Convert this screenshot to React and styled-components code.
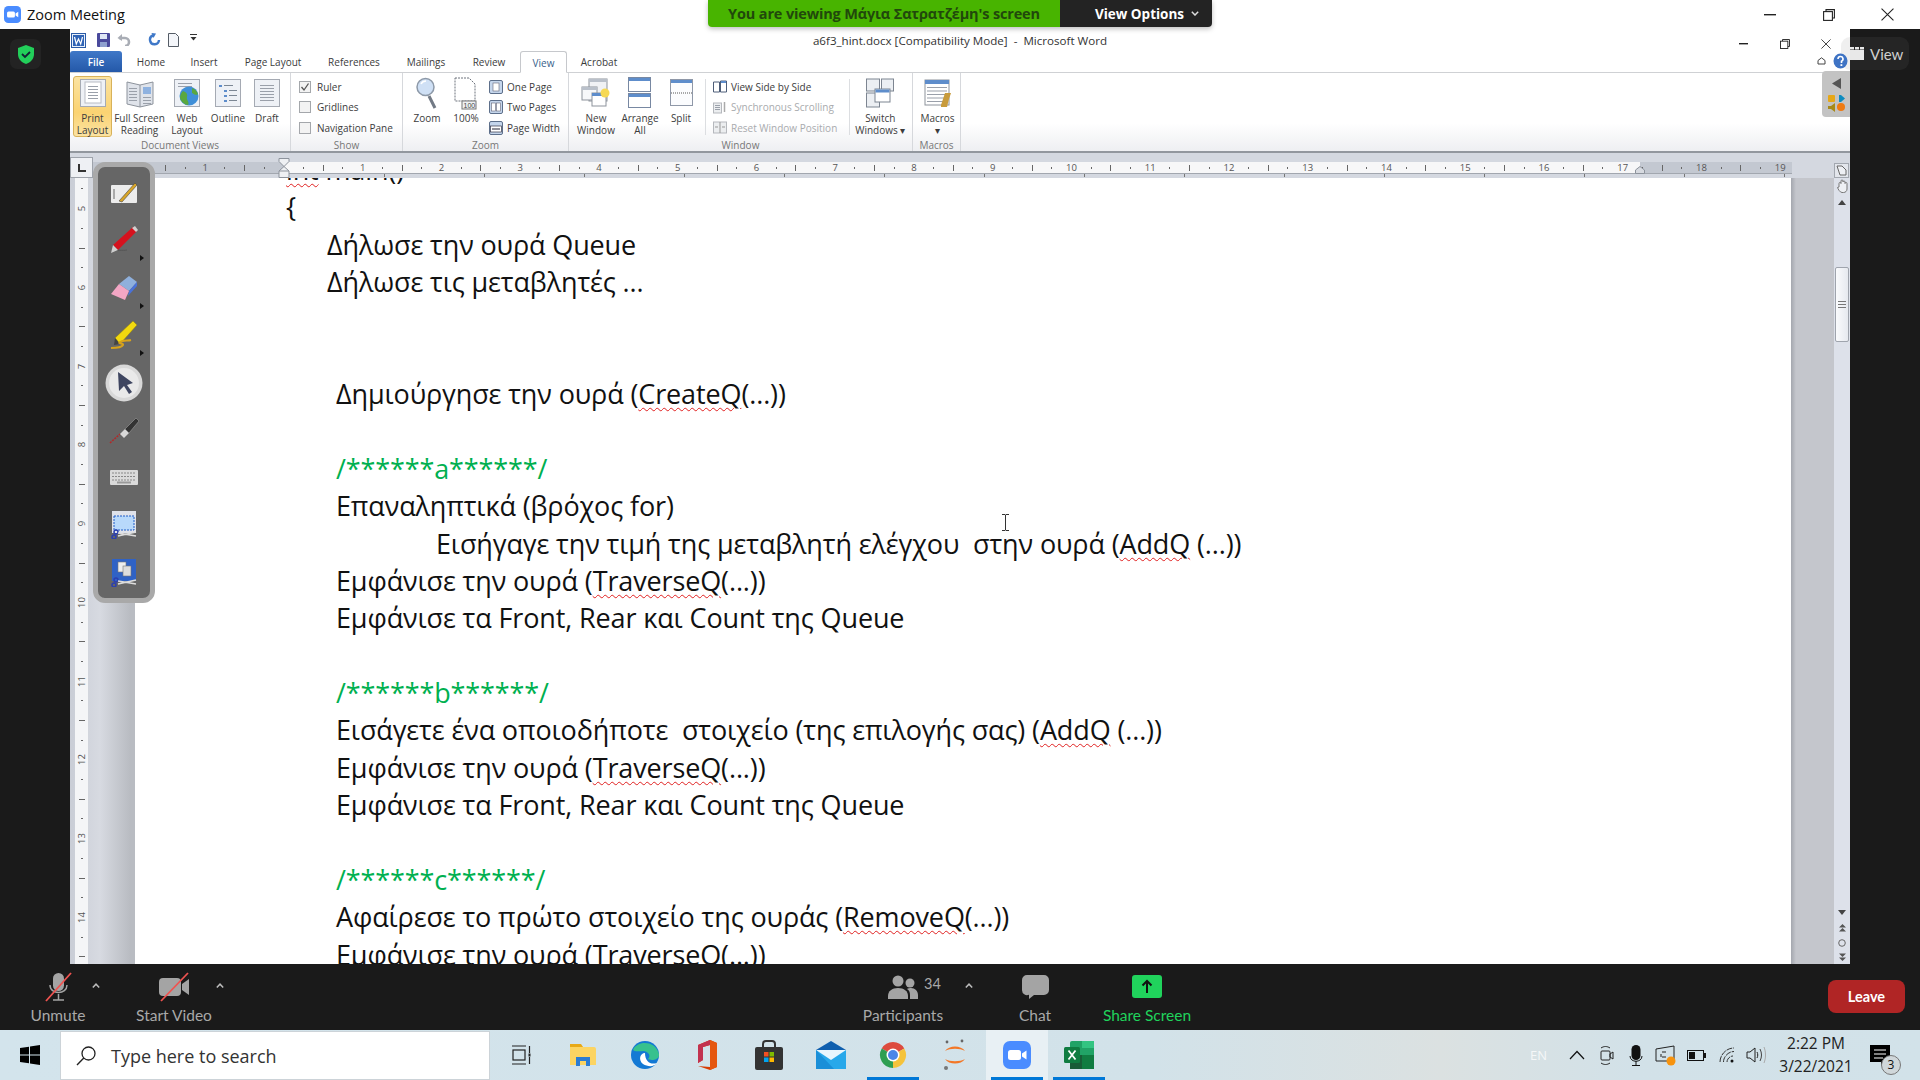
import React from "react";
import styled, { createGlobalStyle } from "styled-components";

const GlobalStyle = createGlobalStyle`
  html, body { margin: 0; padding: 0; background: #1a1a1a; }
  * { box-sizing: border-box; }
`;

const UI_FONT = `"Open Sans", "Noto Sans", sans-serif`;
const ZOOM_FONT = `Lato, "Noto Sans", sans-serif`;

const Screen = styled.div`
  position: relative;
  width: 1920px;
  height: 1080px;
  overflow: hidden;
  display: flex;
  flex-direction: column;
  font-family: ${UI_FONT};
`;

/* ---------- zoom window title ---------- */
const TitleBar = styled.div`
  height: 29px;
  flex: none;
  background: #fff;
  display: flex;
  align-items: center;
  padding: 0 3px 0 4px;
`;
const AppName = styled.span`
  margin-left: 6px;
  font-size: 14.5px;
  color: #111;
`;
const WinButtons = styled.div`
  margin-left: auto;
  display: flex;
`;
const WinButton = styled.div`
  width: ${(p) => p.$w}px;
  display: flex;
  justify-content: center;
  align-items: center;
`;

const Banner = styled.div`
  position: absolute;
  left: 708px;
  top: 0;
  width: 504px;
  height: 27px;
  display: flex;
  border-radius: 0 0 4px 4px;
  overflow: hidden;
  box-shadow: 0 2px 5px rgba(0, 0, 0, 0.25);
  font-size: 14.5px;
  font-weight: 700;
`;
const BannerText = styled.div`
  width: 352px;
  background: #48b400;
  color: #21480c;
  display: flex;
  align-items: center;
  justify-content: center;
  letter-spacing: -0.15px;
`;
const BannerAction = styled.div`
  flex: 1;
  background: #232323;
  color: #fff;
  display: flex;
  align-items: center;
  justify-content: center;
  gap: 7px;
  padding-left: 22px;
  font-size: 13.5px;
`;

/* ---------- main row ---------- */
const MainRow = styled.div`
  flex: none;
  height: 935px;
  display: flex;
  background: #1a1a1a;
`;
const Rail = styled.div`
  width: 70px;
  flex: none;
  background: #1a1a1a;
  padding: 10px 0 0 10px;
`;
const ShieldBox = styled.div`
  width: 31px;
  height: 30px;
  border-radius: 7px;
  background: #232323;
  display: flex;
  align-items: center;
  justify-content: center;
`;
const ViewButton = styled.div`
  position: absolute;
  z-index: 2;
  left: 1841px;
  top: 37px;
  width: 68px;
  height: 33px;
  border-radius: 9px;
  background: rgba(120, 120, 120, 0.12);
  display: flex;
  align-items: center;
  padding-left: 9px;
  gap: 6px;
  font-family: ${ZOOM_FONT};
  font-size: 15px;
  color: #cfcfcf;
`;

/* ---------- word ---------- */
const Word = styled.div`
  width: 1780px;
  flex: none;
  display: flex;
  flex-direction: column;
  background: #fff;
`;
const WordTop = styled.div`
  height: 23px;
  flex: none;
  display: grid;
  grid-template-columns: 1fr auto 1fr;
`;
const Qat = styled.div`
  display: flex;
  align-items: flex-start;
  padding-top: 4px;
`;
const QatSlot = styled.div`
  width: ${(p) => p.$w}px;
  margin-left: ${(p) => p.$ml || 0}px;
  display: flex;
  justify-content: center;
`;
const WordTitle = styled.div`
  font-size: 11.6px;
  line-height: 24px;
  color: #333;
  white-space: pre;
`;
const WordButtons = styled.div`
  display: flex;
  justify-content: flex-end;
  padding: 5px 4px 0 0;
`;
const TabRow = styled.div`
  height: 21px;
  flex: none;
  display: flex;
  align-items: flex-end;
  border-bottom: 1px solid #cfd1d4;
`;
const FileTab = styled.div`
  width: 52px;
  height: 21px;
  border-radius: 3px 3px 0 0;
  background: linear-gradient(#3f78c8, #2458a8);
  color: #fff;
  font-size: 10px;
  font-weight: 600;
  text-align: center;
  line-height: 23px;
`;
const Tab = styled.div`
  width: ${(p) => p.$w}px;
  margin-left: ${(p) => p.$ml || 0}px;
  height: 21px;
  font-size: 10px;
  line-height: 23px;
  text-align: center;
  color: ${(p) => (p.$active ? "#3a5f8c" : "#3b3b3b")};
  white-space: nowrap;
  ${(p) =>
    p.$active &&
    `background:#fff;border:1px solid #c6c8cc;border-bottom:1px solid #fff;border-radius:3px 3px 0 0;margin-bottom:-1px;height:22px;line-height:22px;`}
`;
const HelpBox = styled.div`
  position: relative;
  z-index: 3;
  margin-left: auto;
  height: 21px;
  display: flex;
  align-items: center;
  gap: 7px;
  padding: 0 2px 2px 0;
`;

const Ribbon = styled.div`
  height: 80px;
  flex: none;
  display: flex;
  background: linear-gradient(#fff 0, #fff 50px, #eeeff2 100%);
  border-bottom: 2px solid #92979e;
`;
const Group = styled.div`
  width: ${(p) => p.$w}px;
  flex: none;
  display: flex;
  flex-direction: column;
  border-right: 1px solid #d6d8dc;
`;
const GroupBody = styled.div`
  height: 66px;
  display: flex;
  padding: 3px 0 0 ${(p) => p.$pl || 0}px;
`;
const GroupLabel = styled.div`
  font-size: 10px;
  line-height: 12px;
  text-align: center;
  color: #777;
`;
const LargeButton = styled.div`
  width: ${(p) => p.$w}px;
  flex: none;
  height: 61px;
  display: flex;
  flex-direction: column;
  align-items: center;
  font-size: 10px;
  line-height: 12px;
  color: #3c3c3c;
  text-align: center;
  white-space: pre;
  padding-top: 2px;
  border-radius: 3px;
  ${(p) =>
    p.$active &&
    `background:linear-gradient(#fbe3a2,#fbd372 60%,#fbe3a2);border:1px solid #d8b25a;padding-top:1px;`}
`;
const LargeIcon = styled.div`
  height: 30px;
  margin-bottom: 4px;
  display: flex;
  align-items: center;
  justify-content: center;
`;
const SmallColumn = styled.div`
  display: flex;
  flex-direction: column;
  padding-top: 2px;
  gap: 3.5px;
  margin-left: ${(p) => p.$ml || 0}px;
`;
const SmallItem = styled.div`
  height: 17px;
  display: flex;
  align-items: center;
  gap: ${(p) => p.$gap || 4}px;
  font-size: 10px;
  white-space: nowrap;
  color: ${(p) => (p.$muted ? "#a9abae" : "#3c3c3c")};
`;
const CheckBox = styled.div`
  width: 12px;
  height: 12px;
  border: 1px solid #a4a7ab;
  background: #f3f3f3;
  display: flex;
  align-items: center;
  justify-content: center;
`;
const RibbonDivider = styled.div`
  width: 1px;
  height: 56px;
  margin: 3px 0 0 ${(p) => p.$ml || 0}px;
  background: #dcdee1;
`;
const AddInPanel = styled.div`
  position: absolute;
  left: 1822px;
  top: 71px;
  width: 28px;
  height: 46px;
  background: #c3c3c3;
  border-radius: 4px 0 0 4px;
  display: flex;
  align-items: center;
  justify-content: center;
`;

/* ---------- rulers ---------- */
const RulerRow = styled.div`
  height: 25px;
  flex: none;
  display: flex;
  background: #d4d8e0;
`;
const TabStopBox = styled.div`
  width: 23px;
  height: 21px;
  margin-top: 4px;
  border: 1px solid #9ea3ab;
  background: #eef0f4;
  display: flex;
  align-items: center;
  justify-content: center;
`;
const HRuler = styled.div`
  position: relative;
  width: 1699px;
  height: 12px;
  margin-top: 9px;
  padding-left: 23.55px;
  display: flex;
  overflow: hidden;
  background: linear-gradient(
    90deg,
    #c3c8d1 0,
    #c3c8d1 191px,
    #f7f7f8 191px,
    #f7f7f8 1547px,
    #c3c8d1 1547px
  );
  border-bottom: 1px solid #a2a7af;
`;
const HSlot = styled.div`
  width: 19.7px;
  flex: none;
  display: flex;
  align-items: center;
  justify-content: center;
  font-size: 9.5px;
  color: #555;
`;
const HLine = styled.div`
  width: 1px;
  height: ${(p) => (p.$long ? 6 : 2)}px;
  background: #666;
`;
const ViewRulerToggle = styled.div`
  width: 15px;
  height: 15px;
  margin: 10px 1px 0 auto;
  border: 1px solid #a2a7af;
  background: #e3e6ec;
  display: flex;
  align-items: center;
  justify-content: center;
`;
const TabMarks = styled.div`
  position: absolute;
  left: 93px;
  top: 174px;
  width: 1699px;
  height: 3px;
  background: repeating-linear-gradient(
    90deg,
    transparent 0,
    transparent 99px,
    #777 99px,
    #777 100px
  );
  background-position: 92px 0;
`;
const IndentMark = styled.div`
  position: absolute;
  left: ${(p) => p.$x}px;
  top: ${(p) => p.$y}px;
  line-height: 0;
`;
const DocArea = styled.div`
  height: 786px;
  flex: none;
  display: flex;
  background: #c8ccd4;
`;
const VRuler = styled.div`
  width: 65px;
  flex: none;
  padding: 0 0 0 5px;
  background: linear-gradient(90deg, #c9cdd6 0, #d7dae1 30px, #b9bcc2 60px);
`;
const VTrack = styled.div`
  width: 13px;
  height: 100%;
  padding-top: 1.15px;
  background: #f4f5f7;
  overflow: hidden;
`;
const VSlot = styled.div`
  height: 19.7px;
  display: flex;
  align-items: center;
  justify-content: center;
  font-size: 9.5px;
  color: #555;
`;
const VNumber = styled.span`
  transform: rotate(-90deg);
`;
const VLine = styled.div`
  height: 1px;
  width: ${(p) => (p.$long ? 6 : 2)}px;
  background: #666;
`;
const Page = styled.div`
  width: 1656px;
  flex: none;
  overflow: hidden;
  background: #fff;
`;
const DocText = styled.div`
  margin-top: -27px;
  padding-left: 151px;
  font-family: "Open Sans", "Noto Sans", sans-serif;
  font-size: 27px;
  letter-spacing: -0.13px;
  color: #111;
`;
const DocLine = styled.div`
  height: 37.37px;
  line-height: 37.37px;
  padding-left: ${(p) => p.$indent || 0}px;
  white-space: pre;
  color: ${(p) => (p.$comment ? "#00b050" : "#111")};
`;
const Spell = styled.span`
  text-decoration: underline wavy #e02020 1px;
  text-underline-offset: 3px;
`;
const PageGutter = styled.div`
  width: 43px;
  flex: none;
  background: linear-gradient(90deg, #a4a7ae 0, #c4c6cc 5px, #c4c6cc 100%);
`;
const ScrollBar = styled.div`
  width: 16px;
  flex: none;
  display: flex;
  flex-direction: column;
  align-items: center;
  background: #dde1ea;
`;
const ScrollCell = styled.div`
  height: ${(p) => p.$h}px;
  width: 100%;
  flex: none;
  display: flex;
  align-items: center;
  justify-content: center;
`;
const ScrollThumb = styled.div`
  width: 14px;
  height: 75px;
  margin-top: 57px;
  border: 1px solid #9fa4ad;
  border-radius: 2px;
  background: linear-gradient(90deg, #fafbfd, #e6e9ef);
  display: flex;
  align-items: center;
  justify-content: center;
`;
const ScrollSpacer = styled.div`
  flex: 1;
`;

/* ---------- annotate toolbar ---------- */
const AnnotateBar = styled.div`
  position: absolute;
  left: 93px;
  top: 162px;
  width: 62px;
  height: 441px;
  padding: 2px 0 0;
  border: 5px solid #a9a9a9;
  border-radius: 12px;
  background: #666;
`;
const AnnotateSlot = styled.div`
  position: relative;
  height: 47.5px;
  display: flex;
  align-items: center;
  justify-content: center;
  ${(p) =>
    p.$more &&
    `&::after{content:"";position:absolute;right:6px;bottom:3px;border-left:4px solid #111;border-top:3.5px solid transparent;border-bottom:3.5px solid transparent;}`}
`;
const TextCursor = styled.div`
  position: absolute;
  left: 1001px;
  top: 514px;
  line-height: 0;
`;

/* ---------- zoom controls ---------- */
const ZoomBar = styled.div`
  height: 66px;
  flex: none;
  background: #1a1a1a;
  display: flex;
  font-family: ${ZOOM_FONT};
`;
const ToolItem = styled.div`
  width: ${(p) => p.$w}px;
  margin-left: ${(p) => p.$ml || 0}px;
  flex: none;
  display: flex;
  flex-direction: column;
  align-items: center;
  font-size: 15.5px;
  line-height: 17px;
  color: ${(p) => p.$color || "#a9a9a9"};
  white-space: nowrap;
`;
const ToolIcon = styled.div`
  height: 37px;
  margin-top: 4px;
  margin-bottom: 2px;
  display: flex;
  align-items: center;
  justify-content: center;
  gap: 6px;
  font-size: 14.5px;
`;
const Count = styled.span`
  position: relative;
  top: -3px;
  width: 17px;
  margin-right: -23px;
`;
const Caret = styled.div`
  width: 10px;
  margin-left: ${(p) => p.$ml || 0}px;
  flex: none;
  padding-top: 18px;
  line-height: 0;
`;
const LeaveButton = styled.div`
  width: 77px;
  height: 33px;
  margin: 16px 15px 0 auto;
  background: #b02525;
  border-radius: 8px;
  color: #fff;
  font-size: 14.5px;
  font-weight: 700;
  display: flex;
  align-items: center;
  justify-content: center;
`;

/* ---------- task bar ---------- */
const TaskBar = styled.div`
  height: 50px;
  flex: none;
  display: flex;
  background: linear-gradient(
    90deg,
    #d3e4ec 0,
    #d2e2e9 60%,
    #dbe1e1 75%,
    #d2e1e8 85%,
    #d2e2e9 100%
  );
`;
const StartButton = styled.div`
  width: 60px;
  display: flex;
  align-items: center;
  justify-content: center;
`;
const SearchBox = styled.div`
  width: 430px;
  margin-top: 1px;
  background: #fff;
  border: 1px solid #ccd3d8;
  display: flex;
  align-items: center;
  padding-left: 15px;
  gap: 15px;
  font-size: 18px;
  color: #333;
`;
const TaskItem = styled.div`
  width: 62px;
  flex: none;
  display: flex;
  align-items: center;
  justify-content: center;
  position: relative;
  background: ${(p) => (p.$focus ? "#e8f0f4" : "transparent")};
  ${(p) =>
    p.$open &&
    `&::after{content:"";position:absolute;left:5px;right:5px;bottom:0;height:3px;background:#0078d7;}`}
`;
const Tray = styled.div`
  margin-left: auto;
  padding-right: 17px;
  display: flex;
  align-items: center;
`;
const TraySlot = styled.div`
  width: ${(p) => p.$w}px;
  display: flex;
  align-items: center;
  justify-content: center;
`;
const EnLabel = styled.span`
  font-size: 13px;
  color: #f5f7f8;
`;
const Clock = styled.div`
  width: 86px;
  margin-left: 4px;
  text-align: center;
  font-size: 15.5px;
  line-height: 23px;
  color: #222;
  white-space: nowrap;
`;
const NotifyBox = styled.div`
  position: relative;
  width: 42px;
  margin-left: 2px;
  display: flex;
  justify-content: center;
  padding-right: 4px;
`;
const NotifyBadge = styled.span`
  position: absolute;
  left: 20px;
  top: 10px;
  width: 20px;
  height: 20px;
  border-radius: 50%;
  border: 1px solid #777;
  background: #d0d7da;
  color: #111;
  font-size: 12px;
  line-height: 18px;
  text-align: center;
`;

/* ---------- icons ---------- */
const Svg = ({ w, h, children, vb }) => (
  <svg width={w} height={h} viewBox={vb || `0 0 ${w} ${h}`} fill="none">
    {children}
  </svg>
);

const ZoomLogo = ({ s = 16 }) => (
  <Svg w={s} h={s} vb="0 0 28 28">
    <rect width="28" height="28" rx="7" fill="#4a8cff" />
    <rect x="5" y="9" width="13" height="10" rx="2.5" fill="#fff" />
    <path d="M19 12.5 23.5 9.5v9L19 15.5z" fill="#fff" />
  </Svg>
);
const Shield = () => (
  <Svg w={16} h={19}>
    <path d="M8 0 16 3v6c0 5-3.4 8.3-8 10C3.4 17.3 0 14 0 9V3z" fill="#22cf5a" />
    <path d="m4 9 3 3 5-5" stroke="#123" strokeWidth="1.8" />
  </Svg>
);
const WinMin = ({ w = 12, c = "#222" }) => (
  <Svg w={w} h={2}>
    <rect width={w} height="1.4" fill={c} />
  </Svg>
);
const WinRestore = ({ s = 12 }) => (
  <Svg w={s} h={s} vb="0 0 12 12">
    <rect x=".6" y="2.6" width="8.8" height="8.8" stroke="#222" strokeWidth="1.1" fill="#fff" />
    <path d="M3 2.5V.6h8.4v8.4H9.5" stroke="#222" strokeWidth="1.1" />
  </Svg>
);
const WinClose = ({ s = 12 }) => (
  <Svg w={s} h={s} vb="0 0 12 12">
    <path d="m.5.5 11 11m0-11-11 11" stroke="#222" strokeWidth="1" />
  </Svg>
);
const Chevron = ({ c = "#bbb", up }) => (
  <Svg w={8} h={5}>
    <path d={up ? "M.8 4.5 4 1.2l3.2 3.3" : "M.8.8 4 4l3.2-3.2"} stroke={c} strokeWidth="1.5" />
  </Svg>
);

const WordLogo = () => (
  <Svg w={15} h={15}>
    <rect x=".5" y=".5" width="14" height="14" fill="#e8f0fa" stroke="#2a5aa6" />
    <rect x="2" y="2" width="11" height="11" fill="#2f63b5" />
    <path d="m3.5 4 1.8 7 2.2-5 2.2 5L11.5 4" stroke="#fff" strokeWidth="1.2" />
  </Svg>
);
const SaveIcon = () => (
  <Svg w={13} h={14}>
    <rect width="13" height="14" rx="1" fill="#4a4a9c" />
    <rect x="3" y="1" width="7" height="5" fill="#dfe7f5" />
    <rect x="3" y="9" width="7" height="5" fill="#8ea0cf" />
  </Svg>
);
const UndoIcon = () => (
  <Svg w={14} h={13}>
    <path d="M2 5h6a4 4 0 0 1 0 8" stroke="#a9adb5" strokeWidth="2.6" />
    <path d="M5 1 .5 5 5 8z" fill="#a9adb5" />
  </Svg>
);
const RedoIcon = () => (
  <Svg w={13} h={13}>
    <path d="M5 2.5A4.5 4.5 0 1 0 11 7" stroke="#3f78c8" strokeWidth="2.4" />
    <path d="M3.5 0 8 .5 5.5 5z" fill="#3f78c8" />
  </Svg>
);
const NewDocIcon = () => (
  <Svg w={11} h={14}>
    <path d="M.5.5h7l3 3v10H.5z" fill="#f4f6fa" stroke="#555c66" />
  </Svg>
);
const QatMenu = () => (
  <Svg w={8} h={8}>
    <rect y="1" width="7" height="1" fill="#333" />
    <path d="M.5 4h6L3.5 7.5z" fill="#333" />
  </Svg>
);

const Frame = ({ w = 26, h = 28, children }) => (
  <Svg w={w} h={h}>
    <rect x=".5" y=".5" width={w - 1} height={h - 1} fill="#eef1f6" stroke="#a5aab3" />
    {children}
  </Svg>
);
const lines = (x, y, w, n, step = 3) =>
  Array.from({ length: n }, (_, i) => (
    <rect key={i} x={x} y={y + i * step} width={w} height="1" fill="#9aa0aa" />
  ));

const PrintLayoutIcon = () => (
  <Frame>
    <rect x="5" y="3" width="16" height="21" fill="#fff" stroke="#b8bcc4" />
    {lines(8, 7, 10, 5)}
  </Frame>
);
const FullReadIcon = () => (
  <Svg w={28} h={30}>
    <path d="M1 4 14 7l13-3v22l-13 3L1 26z" fill="#dfe3ea" stroke="#8d939c" />
    <path d="M14 7v22" stroke="#8d939c" />
    {lines(3, 10, 8, 5)}
    <rect x="17" y="9" width="8" height="7" fill="#8fb2e0" />
    {lines(17, 19, 8, 3)}
  </Svg>
);
const WebIcon = () => (
  <Frame>
    {lines(4, 4, 14, 2)}
    <circle cx="15" cy="17" r="9.5" fill="#3f8fd8" />
    <path d="M9 12c3 1 5 3 4 6s3 5 1 8c-3 0-7-3-8-7 0-3 1-5 3-7zM18 9c3 1 5 3 6 6-2 2-4 0-6-1z" fill="#5aa83e" />
  </Frame>
);
const OutlineIcon = () => (
  <Frame>
    <rect x="4" y="6" width="3" height="2" fill="#5e8dcb" />
    <rect x="9" y="6" width="9" height="1" fill="#7c8794" />
    <rect x="9" y="11" width="3" height="2" fill="#5e8dcb" />
    <rect x="14" y="11" width="8" height="1" fill="#7c8794" />
    <rect x="9" y="16" width="3" height="2" fill="#5e8dcb" />
    <rect x="14" y="16" width="8" height="1" fill="#7c8794" />
    <rect x="9" y="21" width="3" height="2" fill="#5e8dcb" />
    <rect x="14" y="21" width="8" height="1" fill="#7c8794" />
  </Frame>
);
const DraftIcon = () => <Frame>{lines(6, 6, 14, 6, 3)}</Frame>;
const MagnifierIcon = () => (
  <Svg w={22} h={32}>
    <path d="m13 19 6 12" stroke="#727a85" strokeWidth="3" />
    <circle cx="9.5" cy="10" r="8.5" fill="#cfe0f5" stroke="#8d99a8" strokeWidth="1.5" />
    <path d="M5 7c1-2 3-3 5-3" stroke="#fff" strokeWidth="1.5" />
  </Svg>
);
const HundredIcon = () => (
  <Svg w={24} h={33}>
    <path d="M1 1h14l6 6v17H1z" fill="#fff" stroke="#6d737c" strokeDasharray="2 1" />
    <rect x="8" y="24" width="14" height="8" fill="#eef0f3" stroke="#777" />
    <text x="9.5" y="31" fontSize="7" fontFamily="Liberation Sans" fill="#444">
      100
    </text>
  </Svg>
);
const OnePageIcon = () => (
  <Svg w={14} h={14}>
    <rect x=".5" y=".5" width="13" height="13" rx="1.5" fill="#c5d6ec" stroke="#5d6f8a" />
    <rect x="4" y="3" width="6" height="8" fill="#fff" stroke="#667" strokeWidth=".6" />
  </Svg>
);
const TwoPagesIcon = () => (
  <Svg w={14} h={14}>
    <rect x=".5" y=".5" width="13" height="13" rx="1.5" fill="#c5d6ec" stroke="#5d6f8a" />
    <rect x="2.5" y="3" width="4" height="8" fill="#fff" stroke="#667" strokeWidth=".6" />
    <rect x="7.5" y="3" width="4" height="8" fill="#fff" stroke="#667" strokeWidth=".6" />
  </Svg>
);
const PageWidthIcon = () => (
  <Svg w={14} h={14}>
    <rect x=".5" y=".5" width="13" height="13" rx="1.5" fill="#c5d6ec" stroke="#5d6f8a" />
    <rect x="1.5" y="5" width="11" height="6" fill="#fff" stroke="#334" strokeWidth=".7" />
    <path d="M3 8h8" stroke="#223" />
  </Svg>
);
const NewWindowIcon = () => (
  <Svg w={30} h={30}>
    <rect x="8" y="1" width="18" height="22" fill="#f0f2f5" stroke="#8d939c" />
    <rect x="8" y="1" width="18" height="3" fill="#b9c0ca" />
    <rect x="1" y="9" width="15" height="13" fill="#f7f8fa" stroke="#8d939c" />
    <rect x="1" y="9" width="15" height="3" fill="#b9c0ca" />
    <rect x="11" y="15" width="14" height="13" fill="#fff" stroke="#8d939c" />
    <rect x="11" y="15" width="10" height="3" fill="#5e8dcb" />
    <circle cx="24" cy="15" r="4.5" fill="#f6d955" />
  </Svg>
);
const ArrangeIcon = () => (
  <Svg w={24} h={32}>
    <rect x=".5" y=".5" width="22" height="14" fill="#fff" stroke="#7888a2" />
    <rect x="1" y="1" width="21" height="3" fill="#5e8dcb" />
    <rect x=".5" y="16.5" width="22" height="14" fill="#fff" stroke="#7888a2" />
    <rect x="1" y="17" width="21" height="3" fill="#5e8dcb" />
  </Svg>
);
const SplitIcon = () => (
  <Svg w={23} h={28}>
    <rect x=".5" y=".5" width="22" height="26" fill="#fbfcfe" stroke="#8f98a8" />
    <rect x="1" y="1" width="21" height="3" fill="#5e8dcb" />
    <path d="M1 14h21" stroke="#555" strokeDasharray="1 1" />
  </Svg>
);
const SideBySideIcon = () => (
  <Svg w={14} h={13}>
    <path d="M.5 2h6v10h-6zM7.5 1h6v11h-6z" fill="#fff" stroke="#4d5d78" />
    <rect x="8" y="1" width="5" height="2" fill="#5e8dcb" />
  </Svg>
);
const SyncIcon = () => (
  <Svg w={14} h={13}>
    <rect x=".5" y="2" width="8" height="10" fill="#eceef0" stroke="#b5b8bd" />
    {lines(2, 4, 5, 3, 2)}
    <path d="M11.5 1v10" stroke="#aaa" strokeWidth="1.5" />
  </Svg>
);
const ResetIcon = () => (
  <Svg w={14} h={13}>
    <rect x=".5" y="1" width="13" height="11" fill="#eceef0" stroke="#b5b8bd" />
    <path d="M7 1v11M2 6h3m4 0h3" stroke="#999" />
  </Svg>
);
const SwitchIcon = () => (
  <Svg w={28} h={30}>
    <rect x=".5" y="1" width="13" height="12" fill="#eceff3" stroke="#7d8591" />
    <rect x="15.5" y="1" width="12" height="12" fill="#eceff3" stroke="#7d8591" />
    <rect x=".5" y="15" width="13" height="14" fill="#eceff3" stroke="#7d8591" />
    <rect x="9" y="11" width="15" height="13" fill="#fff" stroke="#7d8591" />
    <rect x="9.5" y="11.5" width="14" height="3" fill="#5e8dcb" />
  </Svg>
);
const MacrosIcon = () => (
  <Svg w={28} h={30}>
    <rect x="1" y="2" width="24" height="25" fill="#fff" stroke="#8d939c" />
    <rect x="1" y="2" width="24" height="4" fill="#5e8dcb" />
    {lines(3, 9, 20, 5, 3.5)}
    <path d="M17 27 21 15h6l-2 6-2 8h-6z" fill="#c89b3c" />
  </Svg>
);
const Tick = () => (
  <Svg w={10} h={10}>
    <path d="m1.5 5 2.5 3 4.5-6.5" stroke="#555" strokeWidth="1.3" />
  </Svg>
);
const HelpIcon = () => (
  <Svg w={15} h={16}>
    <ellipse cx="7.5" cy="8" rx="7" ry="7.5" fill="#3e73c4" />
    <path d="M5 6a2.5 2.5 0 1 1 3.5 2.3V10" stroke="#fff" strokeWidth="1.6" />
    <rect x="7.5" y="11.2" width="1.8" height="1.8" fill="#fff" />
  </Svg>
);
const CollapseIcon = () => (
  <Svg w={9} h={8}>
    <path d="M1 3.5 4.5.8 8 3.5V7H1z" stroke="#444" />
  </Svg>
);
const AddInIcons = () => (
  <Svg w={20} h={38}>
    <path d="M15 3v11L6 8.5z" fill="#555" />
    <rect x="2" y="20" width="7" height="7" rx="1" fill="#e6a717" />
    <path d="M13 20h2l4 3.5-4 3.5h-2z" fill="#0d8bbf" />
    <path d="M2 31h3l4-3v9l-4-3H2z" fill="#a78a18" />
    <circle cx="15" cy="32" r="4" fill="#ef7a12" />
  </Svg>
);

const TabStopIcon = () => (
  <Svg w={8} h={8}>
    <path d="M1 0v7h7" stroke="#333" strokeWidth="2" />
  </Svg>
);
const HourGlass = () => (
  <Svg w={12} h={20}>
    <path d="M1 .5h10v3L6 8.5l5 4.5v6.5H1V13l5-4.5-5-5z" fill="#eef0f3" stroke="#8d939c" />
    <path d="M1 13h10" stroke="#8d939c" />
  </Svg>
);
const RightIndent = () => (
  <Svg w={10} h={8}>
    <path d="M5 .5 9.5 4v3.5H.5V4z" fill="#d7dae0" stroke="#8d939c" />
  </Svg>
);
const ViewGridIcon = () => (
  <Svg w={14} h={13}>
    <rect y="3" width="14" height="10" fill="#e8e8e8" />
    <rect width="4" height="2.5" fill="#e8e8e8" />
    <rect x="5" width="4" height="2.5" fill="#e8e8e8" />
    <rect x="10" width="4" height="2.5" fill="#e8e8e8" />
  </Svg>
);
const SelectBrowseIcon = () => (
  <Svg w={11} h={11}>
    <path d="M1 1h5l4 4v5H4z" fill="#eef0f4" stroke="#666" />
  </Svg>
);
const HandIcon = () => (
  <Svg w={11} h={14}>
    <path d="M2 8V4.5a1 1 0 0 1 2 0V2a1 1 0 0 1 2 0v1a1 1 0 0 1 2 0v1.5a1 1 0 0 1 2 0V10c0 2-1.5 3.5-3.5 3.5H5C3 13.500 1 10 .5 8.500z" fill="#eef0f4" stroke="#777" />
  </Svg>
);

/* annotate tool icons */
const NoteTool = () => (
  <Svg w={28} h={22}>
    <rect x="1" y="3" width="26" height="18" rx="1" fill="#ececec" />
    <rect x="3" y="7" width="2" height="10" fill="#aaa" />
    <path d="M9 19 25 1l2 2L12 20z" fill="#d8a528" stroke="#444" strokeWidth=".6" />
  </Svg>
);
const PenTool = () => (
  <Svg w={28} h={28}>
    <path d="M1 26c6-3 12-1 16-2" stroke="#555" />
    <path d="M3 19 23 1l4 4L8 24z" fill="#d5121e" />
    <path d="M3 19l5 5-7 3zM22 2l4 4 2-2-3-4z" fill="#cfcfcf" />
  </Svg>
);
const EraserTool = () => (
  <Svg w={28} h={28}>
    <path d="M9 10 19 2l8 6-8 9z" fill="#8fb0dc" />
    <path d="M19 17l8-9v4l-9 10z" fill="#4a72d8" />
    <path d="M1 20 9 10l10 7-4 9z" fill="#f3a6c4" />
  </Svg>
);
const MarkerTool = () => (
  <Svg w={28} h={30}>
    <path d="M5 18 23 1l4 4L10 24z" fill="#f2d90e" stroke="#8c7d10" strokeWidth=".5" />
    <path d="M5 18l5 6-6 1z" fill="#444" />
    <path d="M1 28c6 0 11-1 12-3s-6-1-3-3 8-1 11-2" stroke="#d7a21c" strokeWidth="2" />
  </Svg>
);
const ArrowTool = () => (
  <Svg w={38} h={38}>
    <circle cx="19" cy="19" r="18.5" fill="#d8d8d8" />
    <circle cx="19" cy="19" r="15" fill="#e9e9e9" />
    <path d="m13 8 1 19 5-5 5 8 3-2-5-7 6-2z" fill="#3e4560" />
  </Svg>
);
const LaserTool = () => (
  <Svg w={30} h={28}>
    <path d="M1 27 11 18" stroke="#b02a2a" strokeWidth="1.5" strokeDasharray="2 1" />
    <path d="M11 18l5-5 4 4-5 5z" fill="#d8d8d8" />
    <path d="M16 13 27 2l3 3-10 12z" fill="#333" stroke="#aaa" strokeWidth=".5" />
  </Svg>
);
const KeyboardTool = () => (
  <Svg w={28} h={15}>
    <rect width="28" height="15" rx="1" fill="#dadada" />
    <path d="M2 3h24M2 6.5h24M2 10h24" stroke="#888" strokeDasharray="2 1" />
    <rect x="7" y="11.5" width="14" height="2" fill="#999" />
  </Svg>
);
const Scissors = () => (
  <g>
    <circle cx="3" cy="26" r="2" stroke="#2b3fb0" strokeWidth="1.5" />
    <circle cx="5" cy="21" r="2" stroke="#2b3fb0" strokeWidth="1.5" />
    <path d="M7 22 25 25M7 25l18-4" stroke="#ddd" strokeWidth="1.5" />
  </g>
);
const CaptureAreaTool = () => (
  <Svg w={26} h={28}>
    <rect x="1" width="24" height="22" fill="#dfe2ea" />
    <rect x="3" y="5" width="20" height="14" fill="#b8d9fb" stroke="#1f5cc7" strokeDasharray="2 1" />
    <Scissors />
  </Svg>
);
const CaptureWindowTool = () => (
  <Svg w={26} h={28}>
    <rect x="1" width="24" height="22" fill="#2f62c5" />
    <rect x="7" y="3" width="8" height="10" fill="#eee" stroke="#777" strokeWidth=".6" />
    <rect x="12" y="7" width="8" height="10" fill="#ddd" stroke="#777" strokeWidth=".6" />
    <Scissors />
  </Svg>
);
const IBeam = () => (
  <Svg w={9} h={17}>
    <path d="M1 .5h3l.5.5.5-.5h3M4.5 1v15M1 16.5h3l.5-.5.5.5h3" stroke="#333" />
  </Svg>
);

/* zoom bar icons */
const Slash = ({ x1, y1, x2, y2 }) => (
  <path d={`M${x1} ${y1} ${x2} ${y2}`} stroke="#ef5350" strokeWidth="1.8" />
);
const MicOff = () => (
  <Svg w={30} h={30}>
    <rect x="10" y="1" width="11" height="18" rx="5.5" fill="#a4a4a4" />
    <path d="M7 13c0 10 17 10 17 0M15.5 22v6M10 28h11" stroke="#a4a4a4" strokeWidth="1.5" />
    <Slash x1="3" y1="29" x2="28" y2="1" />
  </Svg>
);
const VideoOff = () => (
  <Svg w={31} h={30}>
    <rect y="6" width="22" height="18" rx="4" fill="#a4a4a4" />
    <path d="M23 12 30 7v16l-7-5z" fill="#a4a4a4" />
    <Slash x1="2" y1="29" x2="29" y2="1" />
  </Svg>
);
const PeopleIcon = () => (
  <Svg w={30} h={24}>
    <circle cx="10" cy="6" r="5.5" fill="#a4a4a4" />
    <path d="M0 24v-3c0-5 4-8 10-8s10 3 10 8v3z" fill="#a4a4a4" />
    <circle cx="22" cy="8" r="4.5" fill="#a4a4a4" />
    <path d="M22 24v-4c0-3-1-5-3-6 1-1 3-1 4-1 4 0 7 3 7 7v4z" fill="#a4a4a4" />
  </Svg>
);
const ChatIcon = () => (
  <Svg w={27} h={24}>
    <path d="M5 0h17a5 5 0 0 1 5 5v10a5 5 0 0 1-5 5H12l-5 4v-4.3A5 5 0 0 1 0 15V5a5 5 0 0 1 5-5z" fill="#a4a4a4" />
  </Svg>
);
const ShareIcon = () => (
  <Svg w={30} h={23}>
    <rect width="30" height="23" rx="3" fill="#20d35c" />
    <path d="M15 18V6m-4.5 4.5L15 6l4.5 4.5" stroke="#111" strokeWidth="2" />
  </Svg>
);

/* task bar icons */
const WinLogo = () => (
  <Svg w={20} h={20}>
    <path d="M0 3 9 1.7V9.500H0zM10 1.500 20 0v9.500H10zM0 10.500h9v7.800L0 17zM10 10.500h10V20l-10-1.500z" fill="#000" />
  </Svg>
);
const SearchGlass = () => (
  <Svg w={20} h={20}>
    <circle cx="12.5" cy="7.5" r="6.5" stroke="#222" strokeWidth="1.3" />
    <path d="M7.8 12 1 19" stroke="#222" strokeWidth="1.4" />
  </Svg>
);
const TaskViewIcon = () => (
  <Svg w={20} h={20}>
    <path d="M1 1h14M1 19h14" stroke="#222" strokeWidth="1.2" />
    <rect x="2" y="5" width="12" height="10" stroke="#222" strokeWidth="1.2" />
    <path d="M18.5 1v7m0 4v7" stroke="#222" strokeWidth="1.2" />
    <rect x="17.5" y="8.5" width="2" height="3" fill="#222" />
  </Svg>
);
const FolderIcon = () => (
  <Svg w={28} h={24}>
    <path d="M1 3a2 2 0 0 1 2-2h8l3 3h11a2 2 0 0 1 2 2v16H1z" fill="#fcd462" />
    <path d="M1 1h11l2 3H1z" fill="#e8a917" />
    <path d="M7 23v-9h14v9h-4v-5h-6v5z" fill="#2b7cd3" />
  </Svg>
);
const EdgeIcon = () => (
  <Svg w={28} h={28}>
    <circle cx="14" cy="14" r="14" fill="#1379d4" />
    <path d="M2 9c3-9 22-11 26 4 1 6-8 7-11 5 3-3 1-7-4-8-5 0-9 1-11-1z" fill="#37c18e" />
    <path d="M14 12c-5 0-7 7-2 11 5 3 11 3 14-1-6 2-12-1-12-10z" fill="#fff" />
  </Svg>
);
const OfficeIcon = () => (
  <Svg w={24} h={30}>
    <path d="M3 5 15 0l7 3v24l-7 3-12-4 12 1V5L8 7v13L3 23z" fill="#d83b01" />
    <path d="M15 0l7 3v24l-7 3z" fill="#e5570f" />
    <path d="M3 5 15 0v5L8 7v13l-5 3z" fill="#c2324f" />
  </Svg>
);
const StoreIcon = () => (
  <Svg w={28} h={30}>
    <path d="M8 8V4a3 3 0 0 1 3-3h6a3 3 0 0 1 3 3v4" stroke="#333" strokeWidth="2" />
    <rect y="7" width="28" height="23" rx="2" fill="#333" />
    <rect x="9" y="12" width="4.5" height="4.5" fill="#f25022" />
    <rect x="14.5" y="12" width="4.5" height="4.5" fill="#7fba00" />
    <rect x="9" y="17.5" width="4.5" height="4.5" fill="#00a4ef" />
    <rect x="14.5" y="17.5" width="4.5" height="4.5" fill="#ffb900" />
  </Svg>
);
const MailIcon = () => (
  <Svg w={30} h={28}>
    <path d="M15 0 30 9H0z" fill="#0f5fae" />
    <rect y="9" width="30" height="19" fill="#28a8ea" />
    <path d="M0 9h30L15 19z" fill="#eaf6fd" />
    <path d="M0 28V9l18 19z" fill="#1a8fd8" />
  </Svg>
);
const ChromeIcon = () => (
  <Svg w={28} h={28}>
    <path d="M14 14 2.74 7.5A13 13 0 0 1 25.26 7.5Z" fill="#dd4b3e" />
    <path d="M14 14 25.26 7.5A13 13 0 0 1 14 27Z" fill="#f5c33b" />
    <path d="M14 14 14 27A13 13 0 0 1 2.74 7.5Z" fill="#2e9e52" />
    <circle cx="14" cy="14" r="6.5" fill="#fff" />
    <circle cx="14" cy="14" r="5" fill="#4a86e8" />
  </Svg>
);
const OrbitIcon = () => (
  <Svg w={24} h={32}>
    <path d="M2 12c4-6 16-6 20 0-5-3-15-3-20 0zM2 20c4 6 16 6 20 0-5 3-15 3-20 0z" fill="#f37726" />
    <circle cx="4" cy="3" r="1.4" fill="#666" />
    <circle cx="19" cy="2" r="1.4" fill="#666" />
    <circle cx="3" cy="29" r="2" fill="#777" />
  </Svg>
);
const ExcelIcon = () => (
  <Svg w={30} h={28}>
    <rect x="6" y="0" width="24" height="28" rx="2" fill="#21a366" />
    <rect x="18" y="0" width="12" height="7" fill="#33c481" />
    <rect x="18" y="14" width="12" height="14" fill="#107c41" />
    <rect x="6" y="14" width="12" height="14" fill="#185c37" />
    <rect y="6" width="16" height="16" rx="1.5" fill="#107c41" />
    <path d="m4.5 9.5 7 9m0-9-7 9" stroke="#fff" strokeWidth="1.8" />
  </Svg>
);
const TrayUp = () => (
  <Svg w={16} h={10}>
    <path d="M1 9 8 1.5 15 9" stroke="#111" strokeWidth="1.2" />
  </Svg>
);
const TrayVideo = () => (
  <Svg w={14} h={20}>
    <rect x="1" y="6" width="9" height="9" rx="1" stroke="#222" />
    <path d="m10 9 3-2v7l-3-2zM1 3c3-2 6-2 9 0M1 18c3 2 6 2 9 0" stroke="#222" />
  </Svg>
);
const TrayMic = () => (
  <Svg w={14} h={21}>
    <rect x="2.5" width="9" height="15" rx="4.5" fill="#111" />
    <path d="M1 11c0 7 12 7 12 0M7 16v4M3 20.5h8" stroke="#111" />
  </Svg>
);
const TrayRemote = () => (
  <Svg w={21} h={21}>
    <path d="M1 4 19 1v15H1z" stroke="#222" />
    <path d="M7 7h4M6 12V9m5 3H7" stroke="#222" />
    <circle cx="16" cy="16" r="4.5" fill="#f7930e" />
  </Svg>
);
const TrayBattery = () => (
  <Svg w={19} h={11}>
    <rect x=".5" y=".5" width="16" height="10" stroke="#111" fill="none" />
    <rect x="2" y="2" width="6" height="7" fill="#111" />
    <rect x="17" y="3" width="2" height="5" fill="#111" />
  </Svg>
);
const TrayWifi = () => (
  <Svg w={16} h={16}>
    <path d="M1 15C1 8 7 1 15 1M4.5 15C4.5 10 9 4.5 15 4.5M8 15c0-3 3-6 6-6" stroke="#333" strokeDasharray="6 1" />
    <circle cx="13" cy="14" r="1.5" fill="#111" />
  </Svg>
);
const TraySpeaker = () => (
  <Svg w={20} h={18}>
    <path d="M1 6h3l5-4v14l-5-4H1z" stroke="#222" />
    <path d="M11 6c1 2 1 4 0 6" stroke="#222" />
    <path d="M14 3c2 4 2 8 0 12" stroke="#444" />
    <path d="M18 1c2 5 2 11 0 16" stroke="#aaa" />
  </Svg>
);
const TrayNotify = () => (
  <Svg w={20} h={21}>
    <path d="M0 0h20v17h-6l-3 4v-4H0z" fill="#000" />
    <path d="M4 5h12M4 9h12M4 13h9" stroke="#fff" />
  </Svg>
);

/* ---------- data ---------- */
const cmSlots = () => {
  const out = [];
  for (let n = -2; n <= 19; n++) {
    const label = n === 0 || n === -2 ? "" : String(Math.abs(n));
    out.push(<HSlot key={`${n}a`}>{label}</HSlot>);
    out.push(<HSlot key={`${n}b`}><HLine /></HSlot>);
    out.push(<HSlot key={`${n}c`}><HLine $long /></HSlot>);
    out.push(<HSlot key={`${n}d`}><HLine /></HSlot>);
  }
  return out;
};
const vSlots = () => {
  const out = [];
  for (let n = 5; n <= 14; n++) {
    out.push(<VSlot key={`${n}d`}><VLine /></VSlot>);
    out.push(<VSlot key={`${n}a`}><VNumber>{n}</VNumber></VSlot>);
    out.push(<VSlot key={`${n}b`}><VLine /></VSlot>);
    out.push(<VSlot key={`${n}c`}><VLine $long /></VSlot>);
  }
  return out;
};
const tools = [
  { icon: <NoteTool /> },
  { icon: <PenTool />, more: true },
  { icon: <EraserTool />, more: true },
  { icon: <MarkerTool />, more: true },
  { icon: <ArrowTool /> },
  { icon: <LaserTool /> },
  { icon: <KeyboardTool /> },
  { icon: <CaptureAreaTool /> },
  { icon: <CaptureWindowTool /> },
];
const traverse = (
  <>Εμφάνισε την ουρά (<Spell>TraverseQ</Spell>(...))</>
);
const status = "Εμφάνισε τα Front, Rear και Count της Queue";

const App = () => {
  return (
    <Screen>
      <GlobalStyle />
      <TitleBar>
        <ZoomLogo s={17} />
        <AppName>Zoom Meeting</AppName>
        <WinButtons>
          <WinButton $w={59}><WinMin /></WinButton>
          <WinButton $w={59}><WinRestore /></WinButton>
          <WinButton $w={59}><WinClose s={13} /></WinButton>
        </WinButtons>
      </TitleBar>

      <MainRow>
        <Rail>
          <ShieldBox><Shield /></ShieldBox>
        </Rail>
        <Word>
          <WordTop>
            <Qat>
              <QatSlot $w={16}><WordLogo /></QatSlot>
              <QatSlot $w={27} $ml={4}><SaveIcon /></QatSlot>
              <QatSlot $w={14}><UndoIcon /></QatSlot>
              <QatSlot $w={20} $ml={13}><RedoIcon /></QatSlot>
              <QatSlot $w={18}><NewDocIcon /></QatSlot>
              <QatSlot $w={24}><QatMenu /></QatSlot>
            </Qat>
            <WordTitle>a6f3_hint.docx [Compatibility Mode]  -  Microsoft Word</WordTitle>
            <WordButtons>
              <WinButton $w={41}><WinMin w={9} /></WinButton>
              <WinButton $w={41}><WinRestore s={10} /></WinButton>
              <WinButton $w={41}><WinClose s={10} /></WinButton>
            </WordButtons>
          </WordTop>
          <TabRow>
            <FileTab>File</FileTab>
            <Tab $w={58}>Home</Tab>
            <Tab $w={48}>Insert</Tab>
            <Tab $w={90}>Page Layout</Tab>
            <Tab $w={72}>References</Tab>
            <Tab $w={72}>Mailings</Tab>
            <Tab $w={54}>Review</Tab>
            <Tab $w={47} $ml={4} $active>View</Tab>
            <Tab $w={64}>Acrobat</Tab>
            <HelpBox>
              <CollapseIcon />
              <HelpIcon />
            </HelpBox>
          </TabRow>
          <Ribbon>
            <Group $w={221}>
              <GroupBody $pl={3}>
                <LargeButton $w={39} $active>
                  <LargeIcon><PrintLayoutIcon /></LargeIcon>
                  {"Print\nLayout"}
                </LargeButton>
                <LargeButton $w={55}>
                  <LargeIcon><FullReadIcon /></LargeIcon>
                  {"Full Screen\nReading"}
                </LargeButton>
                <LargeButton $w={40}>
                  <LargeIcon><WebIcon /></LargeIcon>
                  {"Web\nLayout"}
                </LargeButton>
                <LargeButton $w={42}>
                  <LargeIcon><OutlineIcon /></LargeIcon>
                  Outline
                </LargeButton>
                <LargeButton $w={36}>
                  <LargeIcon><DraftIcon /></LargeIcon>
                  Draft
                </LargeButton>
              </GroupBody>
              <GroupLabel>Document Views</GroupLabel>
            </Group>
            <Group $w={112}>
              <GroupBody $pl={8}>
                <SmallColumn>
                  <SmallItem $gap={6}><CheckBox><Tick /></CheckBox>Ruler</SmallItem>
                  <SmallItem $gap={6}><CheckBox />Gridlines</SmallItem>
                  <SmallItem $gap={6}><CheckBox />Navigation Pane</SmallItem>
                </SmallColumn>
              </GroupBody>
              <GroupLabel>Show</GroupLabel>
            </Group>
            <Group $w={166}>
              <GroupBody $pl={4}>
                <LargeButton $w={40}>
                  <LargeIcon><MagnifierIcon /></LargeIcon>
                  Zoom
                </LargeButton>
                <LargeButton $w={38}>
                  <LargeIcon><HundredIcon /></LargeIcon>
                  100%
                </LargeButton>
                <SmallColumn $ml={4}>
                  <SmallItem><OnePageIcon />One Page</SmallItem>
                  <SmallItem><TwoPagesIcon />Two Pages</SmallItem>
                  <SmallItem><PageWidthIcon />Page Width</SmallItem>
                </SmallColumn>
              </GroupBody>
              <GroupLabel>Zoom</GroupLabel>
            </Group>
            <Group $w={344}>
              <GroupBody $pl={4}>
                <LargeButton $w={46}>
                  <LargeIcon><NewWindowIcon /></LargeIcon>
                  {"New\nWindow"}
                </LargeButton>
                <LargeButton $w={42}>
                  <LargeIcon><ArrangeIcon /></LargeIcon>
                  {"Arrange\nAll"}
                </LargeButton>
                <LargeButton $w={40}>
                  <LargeIcon><SplitIcon /></LargeIcon>
                  Split
                </LargeButton>
                <RibbonDivider $ml={4} />
                <SmallColumn $ml={7}>
                  <SmallItem><SideBySideIcon />View Side by Side</SmallItem>
                  <SmallItem $muted><SyncIcon />Synchronous Scrolling</SmallItem>
                  <SmallItem $muted><ResetIcon />Reset Window Position</SmallItem>
                </SmallColumn>
                <RibbonDivider $ml={12} />
                <LargeButton $w={60}>
                  <LargeIcon><SwitchIcon /></LargeIcon>
                  {"Switch\nWindows ▾"}
                </LargeButton>
              </GroupBody>
              <GroupLabel>Window</GroupLabel>
            </Group>
            <Group $w={48}>
              <GroupBody $pl={1}>
                <LargeButton $w={47}>
                  <LargeIcon><MacrosIcon /></LargeIcon>
                  {"Macros\n▾"}
                </LargeButton>
              </GroupBody>
              <GroupLabel>Macros</GroupLabel>
            </Group>
          </Ribbon>
          <RulerRow>
            <TabStopBox><TabStopIcon /></TabStopBox>
            <HRuler>{cmSlots()}</HRuler>
            <ViewRulerToggle><SelectBrowseIcon /></ViewRulerToggle>
          </RulerRow>
          <DocArea>
            <VRuler>
              <VTrack>{vSlots()}</VTrack>
            </VRuler>
            <Page>
              <DocText>
                <DocLine><Spell>int</Spell> main()</DocLine>
                <DocLine>{"{"}</DocLine>
                <DocLine $indent={41}>Δήλωσε την ουρά Queue</DocLine>
                <DocLine $indent={41}>Δήλωσε τις μεταβλητές ...</DocLine>
                <DocLine />
                <DocLine />
                <DocLine $indent={50}>Δημιούργησε την ουρά (<Spell>CreateQ</Spell>(...))</DocLine>
                <DocLine />
                <DocLine $indent={50} $comment>{"/******a******/"}</DocLine>
                <DocLine $indent={50}>Επαναληπτικά (βρόχος for)</DocLine>
                <DocLine $indent={150}>
                  Εισήγαγε την τιμή της μεταβλητή ελέγχου{"  "}στην ουρά (<Spell>AddQ</Spell> (...))
                </DocLine>
                <DocLine $indent={50}>{traverse}</DocLine>
                <DocLine $indent={50}>{status}</DocLine>
                <DocLine />
                <DocLine $indent={50} $comment>{"/******b******/"}</DocLine>
                <DocLine $indent={50}>
                  Εισάγετε ένα οποιοδήποτε{"  "}στοιχείο (της επιλογής σας) (<Spell>AddQ</Spell> (...))
                </DocLine>
                <DocLine $indent={50}>{traverse}</DocLine>
                <DocLine $indent={50}>{status}</DocLine>
                <DocLine />
                <DocLine $indent={50} $comment>{"/******c******/"}</DocLine>
                <DocLine $indent={50}>
                  Αφαίρεσε το πρώτο στοιχείο της ουράς (<Spell>RemoveQ</Spell>(...))
                </DocLine>
                <DocLine $indent={50}>{traverse}</DocLine>
              </DocText>
            </Page>
            <PageGutter />
            <ScrollBar>
              <ScrollCell $h={16}><HandIcon /></ScrollCell>
              <ScrollCell $h={16}>
                <Svg w={8} h={5}><path d="M4 0 8 5H0z" fill="#444" /></Svg>
              </ScrollCell>
              <ScrollThumb>
                <Svg w={8} h={7}><path d="M0 .5h8M0 3.5h8M0 6.5h8" stroke="#777" /></Svg>
              </ScrollThumb>
              <ScrollSpacer />
              <ScrollCell $h={16}>
                <Svg w={8} h={5}><path d="M4 5 8 0H0z" fill="#444" /></Svg>
              </ScrollCell>
              <ScrollCell $h={15}>
                <Svg w={7} h={8}><path d="M3.5 0 7 3.5H0zM3.5 4 7 7.5H0z" fill="#555" /></Svg>
              </ScrollCell>
              <ScrollCell $h={15}>
                <Svg w={8} h={8}><circle cx="4" cy="4" r="3.3" stroke="#666" /></Svg>
              </ScrollCell>
              <ScrollCell $h={14}>
                <Svg w={7} h={8}><path d="M3.5 8 7 4.5H0zM3.5 4 7 .5H0z" fill="#555" /></Svg>
              </ScrollCell>
            </ScrollBar>
          </DocArea>
        </Word>
        <Rail />
      </MainRow>

      <ZoomBar>
        <ToolItem $w={68} $ml={24}>
          <ToolIcon><MicOff /></ToolIcon>
          Unmute
        </ToolItem>
        <Caret><Chevron up /></Caret>
        <ToolItem $w={84} $ml={30}>
          <ToolIcon><VideoOff /></ToolIcon>
          Start Video
        </ToolItem>
        <Caret><Chevron up /></Caret>
        <ToolItem $w={86} $ml={634}>
          <ToolIcon><PeopleIcon /><Count>34</Count></ToolIcon>
          Participants
        </ToolItem>
        <Caret $ml={19}><Chevron up /></Caret>
        <ToolItem $w={60} $ml={30}>
          <ToolIcon><ChatIcon /></ToolIcon>
          Chat
        </ToolItem>
        <ToolItem $w={100} $ml={32} $color="#20d35c">
          <ToolIcon><ShareIcon /></ToolIcon>
          Share Screen
        </ToolItem>
        <LeaveButton>Leave</LeaveButton>
      </ZoomBar>

      <TaskBar>
        <StartButton><WinLogo /></StartButton>
        <SearchBox>
          <SearchGlass />
          Type here to search
        </SearchBox>
        <TaskItem><TaskViewIcon /></TaskItem>
        <TaskItem><FolderIcon /></TaskItem>
        <TaskItem><EdgeIcon /></TaskItem>
        <TaskItem><OfficeIcon /></TaskItem>
        <TaskItem><StoreIcon /></TaskItem>
        <TaskItem><MailIcon /></TaskItem>
        <TaskItem $open><ChromeIcon /></TaskItem>
        <TaskItem><OrbitIcon /></TaskItem>
        <TaskItem $open $focus><ZoomLogo s={28} /></TaskItem>
        <TaskItem $open><ExcelIcon /></TaskItem>
        <Tray>
          <TraySlot $w={45}><EnLabel>EN</EnLabel></TraySlot>
          <TraySlot $w={31}><TrayUp /></TraySlot>
          <TraySlot $w={30}><TrayVideo /></TraySlot>
          <TraySlot $w={28}><TrayMic /></TraySlot>
          <TraySlot $w={31}><TrayRemote /></TraySlot>
          <TraySlot $w={30}><TrayBattery /></TraySlot>
          <TraySlot $w={31}><TrayWifi /></TraySlot>
          <TraySlot $w={27}><TraySpeaker /></TraySlot>
          <Clock>
            2:22 PM
            <br />
            3/22/2021
          </Clock>
          <NotifyBox>
            <TrayNotify />
            <NotifyBadge>3</NotifyBadge>
          </NotifyBox>
        </Tray>
      </TaskBar>

      <Banner>
        <BannerText>You are viewing Μάγια Σατρατζέμη's screen</BannerText>
        <BannerAction>View Options <Chevron c="#ddd" /></BannerAction>
      </Banner>
      <ViewButton><ViewGridIcon />View</ViewButton>
      <AddInPanel><AddInIcons /></AddInPanel>
      <TabMarks />
      <IndentMark $x={278} $y={158}><HourGlass /></IndentMark>
      <IndentMark $x={1635} $y={166}><RightIndent /></IndentMark>
      <AnnotateBar>
        {tools.map((t, i) => (
          <AnnotateSlot key={i} $more={t.more}>{t.icon}</AnnotateSlot>
        ))}
      </AnnotateBar>
      <TextCursor><IBeam /></TextCursor>
    </Screen>
  );
};

export default App;
